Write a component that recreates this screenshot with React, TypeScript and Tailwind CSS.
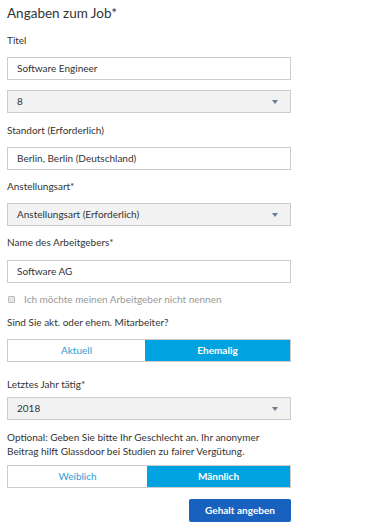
import React from 'react';

const Arrow = () => (
  <svg width="6" height="4" viewBox="0 0 6 4" className="shrink-0">
    <path d="M0 0h6L3 4z" fill="#6b7c93" />
  </svg>
);

function TextInput({ value }: { value: string }) {
  return (
    <div className="h-[23px] border border-[#cccccc] bg-white flex items-center px-[9px] text-[10px] text-[#333333]">
      {value}
    </div>
  );
}

function SelectBox({ value }: { value: string }) {
  return (
    <div className="h-[23px] border border-[#cccccc] bg-[#f2f2f2] flex items-center justify-between pl-[9px] pr-[12px] text-[10px] text-[#333333]">
      <span>{value}</span>
      <Arrow />
    </div>
  );
}

function Toggle({ left, right, split }: { left: string; right: string; split: string }) {
  return (
    <div className="h-[23px] border border-[#cccccc] flex text-[10px]">
      <div className={`${split} flex items-center justify-center bg-white text-[#2a9fd8]`}>{left}</div>
      <div className="flex-1 flex items-center justify-center bg-[#00a2e0] text-white font-bold">{right}</div>
    </div>
  );
}

function Label({ children, className = '' }: { children: React.ReactNode; className?: string }) {
  return <div className={`text-[10px] leading-[14px] text-[#333333] ${className}`}>{children}</div>;
}

export default function App() {
  return (
    <div className="w-[368px] h-[529px] bg-white" style={{ fontFamily: 'Lato, "Open Sans", sans-serif' }}>
      <div className="w-[284px] ml-[7px] pt-[3px] flex flex-col">
        <h1 className="text-[13.5px] leading-[20px] text-[#333333] font-normal">Angaben zum Job*</h1>
        <Label className="mt-[10px]">Titel</Label>
        <div className="mt-[10px]"><TextInput value="Software Engineer" /></div>
        <div className="mt-[10px]"><SelectBox value="8" /></div>
        <Label className="mt-[10px]">Standort (Erforderlich)</Label>
        <div className="mt-[10px]"><TextInput value="Berlin, Berlin (Deutschland)" /></div>
        <Label className="mt-[9px]">Anstellungsart*</Label>
        <div className="mt-[10px]"><SelectBox value="Anstellungsart (Erforderlich)" /></div>
        <Label className="mt-[9px]">Name des Arbeitgebers*</Label>
        <div className="mt-[11px]"><TextInput value="Software AG" /></div>
        <label className="mt-[9px] h-[14px] flex items-center gap-[9px] text-[10px] text-[#999999]">
          <span className="w-[7px] h-[7px] ml-[1px] border border-[#bbbbbb] bg-[#e6e6e6] rounded-[1px]" />
          Ich möchte meinen Arbeitgeber nicht nennen
        </label>
        <Label className="mt-[9px]">Sind Sie akt. oder ehem. Mitarbeiter?</Label>
        <div className="mt-[10px]"><Toggle left="Aktuell" right="Ehemalig" split="w-[137px]" /></div>
        <Label className="mt-[15px]">Letztes Jahr tätig*</Label>
        <div className="mt-[6px]"><SelectBox value="2018" /></div>
        <Label className="mt-[10px]">
          Optional: Geben Sie bitte Ihr Geschlecht an. Ihr anonymer
          <br />
          Beitrag hilft Glassdoor bei Studien zu fairer Vergütung.
        </Label>
        <div className="mt-[7px]"><Toggle left="Weiblich" right="Männlich" split="w-[139px]" /></div>
        <div className="mt-[11px] flex justify-end">
          <button className="w-[102px] h-[23px] rounded-[2px] bg-[#1861bf] text-white text-[10px] font-bold">
            Gehalt angeben
          </button>
        </div>
      </div>
    </div>
  );
}
